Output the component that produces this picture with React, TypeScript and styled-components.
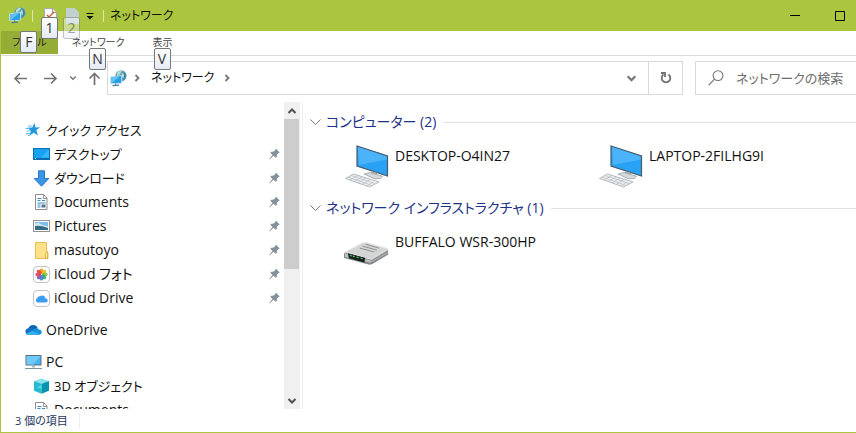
import React from "react";
import styled, { createGlobalStyle } from "styled-components";

const green = "#abc63e";
const fonts = `"Open Sans", "Noto Sans CJK JP", sans-serif`;

const GlobalStyle = createGlobalStyle`
  * { box-sizing: border-box; }
  body { margin: 0; background: #fff; overflow: hidden; }
  button, input { font: inherit; color: inherit; letter-spacing: inherit; }
  button { padding: 0; border: 0; background: none; text-align: left; }
  svg { display: block; flex: none; }
`;

const Window = styled.div`
  display: flex;
  flex-direction: column;
  height: 100vh;
  border-left: 1px solid ${green};
  border-bottom: 1px solid ${green};
  background: #fff;
  color: #111;
  font-family: ${fonts};
  font-size: 14px;
  line-height: 24px;
  white-space: nowrap;
  font-feature-settings: "palt";
`;

const TitleBar = styled.header`
  display: flex;
  align-items: center;
  height: 31px;
  flex: none;
  padding-left: 8px;
  background: ${green};
`;

const Divider = styled.span`
  width: 1px;
  height: 12px;
  margin: 0 6px;
  background: #dbe5ad;
`;

const QuickButton = styled.button<{ $narrow?: boolean }>`
  position: relative;
  display: flex;
  align-items: center;
  justify-content: center;
  width: ${(p) => (p.$narrow ? 14 : 22)}px;
  height: 16px;
`;

const Title = styled.h1`
  flex: 1;
  margin: 0;
  font-size: 12px;
  font-weight: 400;
  line-height: 24px;
`;

const CaptionButton = styled.button`
  display: flex;
  align-items: center;
  justify-content: center;
  width: 45px;
  height: 31px;
  flex: none;
`;

const CaptionArea = styled.div`
  display: flex;
  margin-right: -6px;
`;

const KeyTip = styled.kbd<{ $top: number; $dim?: boolean }>`
  position: absolute;
  z-index: 2;
  top: ${(p) => p.$top}px;
  left: calc(50% - 9px);
  width: 17px;
  height: 22px;
  border: 1px solid #74777b;
  border-radius: 2px;
  background: linear-gradient(#fff, #e4eaf4);
  color: #333;
  font-family: ${fonts};
  font-size: 14px;
  line-height: 20px;
  text-align: center;
  opacity: ${(p) => (p.$dim ? 0.45 : 1)};
`;

const Ribbon = styled.nav`
  display: flex;
  height: 25px;
  flex: none;
  border-bottom: 1px solid #d9d9d9;
`;

const Tab = styled.button<{ $active?: boolean }>`
  position: relative;
  height: 23px;
  padding: 0 ${(p) => (p.$active ? 11 : 14)}px;
  background: ${(p) => (p.$active ? "#96ad35" : "transparent")};
  color: ${(p) => (p.$active ? "#222" : "#444")};
  font-size: 10px;
  line-height: 23px;
`;

const AddressRow = styled.div`
  display: flex;
  align-items: center;
  flex: none;
  padding: 5px 0 7px 11px;
`;

const NavButton = styled.button`
  display: flex;
  align-items: center;
  justify-content: center;
  width: 17px;
  height: 34px;
  flex: none;
`;

const NavGroup = styled.div`
  display: flex;
  gap: 5px;
  width: 95px;
  flex: none;
  > :first-child { margin-right: 8px; }
`;

const AddressBox = styled.div`
  display: flex;
  align-items: center;
  flex: 1;
  height: 34px;
  border: 1px solid #d9d9d9;
  padding-left: 2px;
`;

const Crumb = styled.button`
  font-size: 12px;
  margin: 0 8px 0 9px;
`;

const Crumbs = styled.div`
  display: flex;
  align-items: center;
  flex: 1;
  > svg + svg { margin-left: 5px; }
`;

const BoxButton = styled.button<{ $edge?: boolean }>`
  display: flex;
  align-items: center;
  justify-content: center;
  width: 34px;
  height: 32px;
  border-left: ${(p) => (p.$edge ? "1px solid #d9d9d9" : "0")};
`;

const SearchBox = styled.label`
  display: flex;
  align-items: center;
  gap: 12px;
  width: 161px;
  height: 34px;
  flex: none;
  margin-left: 12px;
  padding-left: 12px;
  border: 1px solid #d9d9d9;
  border-right: 0;
  color: #6d6d6d;
`;

const SearchInput = styled.input`
  flex: 1;
  min-width: 0;
  padding: 0;
  border: 0;
  outline: 0;
  background: none;
  font-size: 13px;
  font-feature-settings: "palt";
  &::placeholder { color: #6d6d6d; opacity: 1; }
`;

const Body = styled.div`
  display: flex;
  flex: 1;
  min-height: 0;
`;

const TreePane = styled.aside`
  width: 283px;
  flex: none;
  overflow: hidden;
  padding-top: 16px;
`;

const TreeList = styled.ul`
  margin: 0 0 8px;
  padding: 0;
  list-style: none;
`;

const TreeItem = styled.button<{ $child?: boolean; $kana?: boolean }>`
  display: flex;
  align-items: center;
  gap: 4px;
  width: 100%;
  height: 24px;
  padding: 0 4px 0 ${(p) => (p.$child ? 32 : 24)}px;
  font-size: ${(p) => (p.$kana ? 13 : 14)}px;
`;

const TreeLabel = styled.span`
  flex: 1;
`;

const ScrollBar = styled.div`
  display: flex;
  flex-direction: column;
  width: 16px;
  flex: none;
  background: #f0f0f0;
`;

const ScrollButton = styled.button`
  display: flex;
  align-items: center;
  justify-content: center;
  height: 17px;
  flex: none;
`;

const ScrollTrack = styled.div`
  flex: 1;
`;

const ScrollThumb = styled.div`
  height: 55%;
  margin-right: 1px;
  background: #cdcdcd;
`;

const Content = styled.main`
  flex: 1;
  min-width: 0;
  margin-left: 2px;
  padding: 8px 0 0 6px;
  border-left: 1px solid #f0f0f0;
  overflow: hidden;
`;

const Group = styled.section`
  min-height: 86px;
`;

const GroupHeader = styled.h2`
  display: flex;
  align-items: center;
  gap: 4px;
  margin: 0;
  color: #1e3287;
  font-size: 14px;
  font-weight: 400;
  line-height: 24px;
  &::after {
    content: "";
    flex: 1;
    height: 1px;
    margin-left: 3px;
    background: #e2e2e2;
  }
`;

const Devices = styled.div`
  display: grid;
  grid-template-columns: repeat(auto-fill, 254px);
  padding: 10px 0 0 35px;
`;

const Device = styled.button`
  display: flex;
  align-items: flex-start;
  gap: 6px;
  font-size: 14px;
`;

const StatusBar = styled.footer`
  display: flex;
  align-items: center;
  gap: 11px;
  height: 23px;
  flex: none;
  padding-left: 14px;
  color: #26365c;
  font-size: 11px;
  &::after {
    content: "";
    width: 1px;
    height: 15px;
    background: #eee;
  }
`;

const NetworkIcon = () => (
  <svg width="17" height="17" viewBox="0 0 17 17">
    <circle cx="11" cy="5.8" r="5.6" fill="#5c9fbb" />
    <path d="M7 3Q10-.5 12 1L10 4 7 6zM12 3l3 1 .5 3-2 2-2-3z" fill="#b8ddc9" />
    <path d="M13 1.500q3 2 3 5-1 3-3 4l1-5z" fill="#3685ac" />
    <path d="M.5 6.800 11.500 5.500v7.800L.5 13.800z" fill="#299fe5" stroke="#dceefa" strokeWidth=".7" />
    <path d="M1 7.300 10 6.300 2 13H1z" fill="#63c1f6" />
    <path d="M5.500 13.500v1.500M2.500 15.700 9 15.200" stroke="#527991" strokeWidth="1.200" />
  </svg>
);

const Arrow = ({ kind }: { kind: "left" | "right" | "up" }) => (
  <svg width="15" height="15" viewBox="0 0 15 15" fill="none" stroke="#737373" strokeWidth="1.700">
    {kind === "left" && <path d="M14 7.500H2M7 2.500l-5 5 5 5" />}
    {kind === "right" && <path d="M1 7.500h12M8 2.500l5 5-5 5" />}
    {kind === "up" && <path d="M7.500 14V2.500M2.500 7.500l5-5 5 5" />}
  </svg>
);

const chevrons = {
  down: "M1.5 3 5 6.5 8.5 3",
  up: "M1.5 7 5 3.5 8.5 7",
  right: "M3.5 2 6.5 5l-3 3",
};

const Chevron = ({ to, size = 10, color = "#777", weight = 1.8 }: {
  to: keyof typeof chevrons; size?: number; color?: string; weight?: number;
}) => (
  <svg width={size} height={size} viewBox="0 0 10 10" fill="none" stroke={color} strokeWidth={weight}>
    <path d={chevrons[to]} />
  </svg>
);

const GroupChevron = () => (
  <svg width="13" height="12" viewBox="0 0 13 12" fill="none" stroke="#777">
    <path d="m1.500 3.500 5 5 5-5" />
  </svg>
);

const PageIcon = ({ dim }: { dim?: boolean }) => (
  <svg width="13" height="16" viewBox="0 0 13 16">
    <path d="M.5.5h8l4 4v11H.5z" fill={dim ? "#c0cfd0" : "#fff"} stroke={dim ? "#c0cfd0" : "#aaa"} />
    {!dim && <path d="M8.500.500v4h4" fill="#eee" stroke="#999" />}
    {!dim && <path d="m3 7 2 2 5-5" fill="none" stroke="#d15436" strokeWidth="1.300" />}
  </svg>
);

const OverflowIcon = () => (
  <svg width="8" height="8" viewBox="0 0 8 8">
    <path d="M.5 1.500h7" stroke="#111" /><path d="M.5 4h7L4 7.500z" fill="#111" />
  </svg>
);

const RefreshIcon = () => (
  <svg width="12" height="14" viewBox="0 0 12 14" fill="none" stroke="#707070" strokeWidth="1.800">
    <path d="M8.500 3.500a4.300 4.300 0 1 1-5 0M1 2h4v4" />
  </svg>
);

const SearchIcon = () => (
  <svg width="16" height="16" viewBox="0 0 16 16" fill="none" stroke="#777" strokeWidth="1.100">
    <circle cx="10" cy="5.600" r="4.900" /><path d="M6.500 9.200.8 15" />
  </svg>
);

const Pin = () => (
  <svg width="11" height="12" viewBox="0 0 11 12" fill="#86919b">
    <path d="M6.800.5 10.700 4.400 9.500 5 8 6.500 7.800 9 6.600 9.800 4.500 7.700 1 11.300.3 11.500.5 10.800 3.500 7 1.300 4.800 2.200 3.700 4.800 3.500 6.300 2z" />
  </svg>
);

const icons = {
  star: (
    <svg width="17" height="16" viewBox="0 0 17 16">
      <path d="m9.500 1 1 4.500 4.500-.3-3.700 3.100 1.800 5.200-4.400-2.800-4.200 3.100 1.400-4.900L2.500 5.700l4.700-.2z" fill="#2497dc" />
      <path d="M3 4h4M.5 6.500H5M1.500 9h4M1 11.500h4M3 13.500h2" stroke="#4fb5ed" strokeWidth=".9" />
    </svg>
  ),
  desktop: (
    <svg width="17" height="16" viewBox="0 0 17 16">
      <rect x=".5" y="2.500" width="16" height="11" fill="#16a1f3" stroke="#0b6fb8" />
      <path d="M15 4 8 11.500h8V4z" fill="#36b4fa" />
      <path d="M1 12.600h15" stroke="#0b63a3" /><path d="M2 12.600h1" stroke="#fff" />
    </svg>
  ),
  download: (
    <svg width="17" height="17" viewBox="0 0 17 17">
      <path d="M5.500.8h6v7.700h4.300l-7.300 7.700L1.200 8.500h4.300z" fill="#3c96e6" stroke="#2875c7" />
    </svg>
  ),
  document: (
    <svg width="17" height="16" viewBox="0 0 17 16">
      <path d="M2.500.5h8l3.500 3.500v11.500H2.500z" fill="#fff" stroke="#8d8d8d" /><path d="M10.500.500v4H14" fill="none" stroke="#999" />
      <path d="M4.500 4.500h4M4.500 6.500h3M9 6.500h3M4.500 9h8M4.500 11h3M4.500 13h3" stroke="#3589c5" />
      <path d="M8.500 10.500h4v3h-4z" fill="#54758a" />
    </svg>
  ),
  picture: (
    <svg width="17" height="16" viewBox="0 0 17 16">
      <rect x=".5" y="2.500" width="16" height="11" fill="#fff" stroke="#929292" />
      <path d="M2 4h13v8H2z" fill="#7ebde8" /><path d="M2 5.500q4-2 6 1l7 2V12H2z" fill="#d4e9ee" />
      <path d="M2 8q5-1 13 2v2H2z" fill="#386982" />
    </svg>
  ),
  folder: (
    <svg width="17" height="17" viewBox="0 0 17 17">
      <path d="M2.500.500h11v9l1.500 1v6H2.500z" fill="#ffe18a" stroke="#e7bd51" /><path d="M12.500 16v-5l2-1.500V16z" fill="#ffedb0" stroke="#dfb84e" />
    </svg>
  ),
  photos: (
    <svg width="17" height="17" viewBox="0 0 17 17">
      <rect x=".5" y=".5" width="16" height="16" rx="3.500" fill="#fff" stroke="#c2c2c2" />
      {["#f7932a", "#e8c51b", "#85c440", "#32ae78", "#3f8ed0", "#8a5bb4", "#d34e80", "#ee4537"].map((c, i) => (
        <ellipse key={c} cx="8.500" cy="5.200" rx="1.900" ry="2.800" fill={c} fillOpacity=".95" transform={`rotate(${i * 45} 8.500 8.500)`} />
      ))}
    </svg>
  ),
  icloud: (
    <svg width="17" height="17" viewBox="0 0 17 17">
      <rect x=".5" y=".5" width="16" height="16" rx="3.500" fill="#fff" stroke="#c2c2c2" />
      <path d="M4.500 12.500a2.500 2.500 0 0 1 0-4.700A2 2 0 0 1 7 6.300a3.300 3.300 0 0 1 5.500 2.200 2 2 0 0 1 .5 4z" fill="#3c9dee" />
    </svg>
  ),
  onedrive: (
    <svg width="17" height="12" viewBox="0 0 17 12">
      <path d="M3.500 4A5 5 0 0 1 12.700 4l-2 4-8 2z" fill="#0864b2" /><path d="M3.700 4.200q3-1 5 1L3 11Q.5 10 .3 7.500q.2-3 3.400-3.300z" fill="#1470c4" />
      <path d="M8.500 5.500Q12 2.500 14 5.500q3 .5 2.700 3.300-.5 2-3 2.200H3z" fill="#1692df" /><path d="m7 7 8.500 3.400-1.800.6H3Q1.700 10.700 1 9.700z" fill="#36b0ed" />
    </svg>
  ),
  pc: (
    <svg width="17" height="16" viewBox="0 0 17 16">
      <rect x="1" y="1.500" width="15" height="9.500" fill="#45b4f2" stroke="#5b6f7d" /><path d="M15.500 2 8 10.500H1.500V2z" fill="#70c9f8" />
      <path d="M7 11.500h3v2H7z" fill="#a9b8c2" /><path d="M0 14.500h17" stroke="#7793a4" />
    </svg>
  ),
  cube: (
    <svg width="17" height="16" viewBox="0 0 17 16">
      <path d="m1 3 7.500-2.500L16 3 8.500 5.800z" fill="#85e4ef" /><path d="m1 3 7.500 2.800v10L1 12.700z" fill="#26bad0" /><path d="M16 3 8.500 5.800v10l7.500-3.100z" fill="#0795ae" />
      <path d="m4 9 4.500-1.500v3.500z" fill="#5ddce8" />
    </svg>
  ),
};

const ComputerIcon = () => (
  <svg width="45" height="45" viewBox="0 0 45 45">
    <path d="m13 1.500 31 10-.5 21L13 22z" fill="#e5e8e9" />
    <path d="m13 2 30.500 10v20L13 22z" fill="#29a2f6" stroke="#485966" strokeWidth="1.200" />
    <path d="m14 3 28.700 9.500v3L15 21z" fill="#55b8fa" opacity=".75" />
    <path d="m27 27 6 2v3l-6-2z" fill="#a8afb5" /><path d="m20 30 6-1.500 12.500 3.700-2 2.200-6 .5z" fill="#d4d9dc" stroke="#929ba1" strokeWidth=".7" />
    <path d="m1.500 34.500 8-4.500 25.500 8-9.500 5z" fill="#edf0f1" stroke="#a4abb1" strokeWidth=".8" />
    <path d="m4 33 24 8.500M7 31.500 31 39.500M6 36l8-4.500m-4 6 8-4.500m-4 6 8-5m-4 6.500 8-5m-3 6.500 6-4" stroke="#b4bbc1" strokeWidth=".7" />
  </svg>
);

const RouterIcon = () => (
  <svg width="45" height="45" viewBox="0 0 46 45">
    <path d="M0 24.500 1 22l18-9 4-.8 21.500 6.300.8 6L29 34.200l-3 .8-26-7z" fill="#858888" />
    <path d="M1 22 19 12.500h5L45 19 28 29.500z" fill="#d3d5d5" stroke="#eee" />
    <path d="m1 23.500 26.500 7.200V33L1 27z" fill="#bfc1c1" />
    <path d="m4 23.300 17.500 4.500-.5 5L5 28.500z" fill="#17201c" />
    <path d="m6 25.500 2 .5m1 .3 2 .5m2 .5 2 .5m2 .5 2 .5" stroke="#45c46e" strokeWidth="1.400" />
    <path d="m16 18 15 4m-12-6 14.500 4M22 14l14 4" stroke="#8c9090" strokeWidth="1" />
    <path d="m28 30 16.500-9.500M28 32l16.500-9" stroke="#c6c9c9" strokeWidth=".8" />
  </svg>
);

type Entry = { icon: keyof typeof icons; label: string; kana?: boolean };

const quickAccess: Entry[] = [
  { icon: "desktop", label: "デスクトップ", kana: true },
  { icon: "download", label: "ダウンロード", kana: true },
  { icon: "document", label: "Documents" },
  { icon: "picture", label: "Pictures" },
  { icon: "folder", label: "masutoyo" },
  { icon: "photos", label: "iCloud フォト" },
  { icon: "icloud", label: "iCloud Drive" },
];

const pcItems: Entry[] = [
  { icon: "cube", label: "3D オブジェクト", kana: true },
  { icon: "document", label: "Documents" },
];

const Entries = ({ root, items = [], pinned }: { root: Entry; items?: Entry[]; pinned?: boolean }) => (
  <TreeList>
    <li>
      <TreeItem $kana={root.kana}>{icons[root.icon]}<TreeLabel>{root.label}</TreeLabel></TreeItem>
    </li>
    {items.map((e) => (
      <li key={e.label}>
        <TreeItem $child $kana={e.kana}>
          {icons[e.icon]}<TreeLabel>{e.label}</TreeLabel>{pinned && <Pin />}
        </TreeItem>
      </li>
    ))}
  </TreeList>
);

const DeviceGroup = ({ title, names, icon }: { title: string; names: string[]; icon: React.ReactNode }) => (
  <Group>
    <GroupHeader><GroupChevron />{title}</GroupHeader>
    <Devices>{names.map((n) => <Device key={n}>{icon}{n}</Device>)}</Devices>
  </Group>
);

export default function App() {
  return (
    <Window>
      <GlobalStyle />
      <TitleBar>
        <NetworkIcon />
        <Divider />
        <QuickButton aria-label="プロパティ"><PageIcon /><KeyTip $top={9}>1</KeyTip></QuickButton>
        <QuickButton aria-label="新しいフォルダー"><PageIcon dim /><KeyTip $top={9} $dim>2</KeyTip></QuickButton>
        <QuickButton $narrow aria-label="カスタマイズ"><OverflowIcon /></QuickButton>
        <Divider />
        <Title>ネットワーク</Title>
        <CaptionArea>
          <CaptionButton aria-label="最小化">
            <svg width="10" height="10" viewBox="0 0 10 10"><path d="M0 4.500h10" stroke="#000" /></svg>
          </CaptionButton>
          <CaptionButton aria-label="最大化">
            <svg width="10" height="10" viewBox="0 0 10 10"><path d="M.5.5h9v9h-9z" fill="none" stroke="#000" /></svg>
          </CaptionButton>
        </CaptionArea>
      </TitleBar>
      <Ribbon>
        <Tab $active>ファイル<KeyTip $top={0}>F</KeyTip></Tab>
        <Tab>ネットワーク<KeyTip $top={17}>N</KeyTip></Tab>
        <Tab>表示<KeyTip $top={17}>V</KeyTip></Tab>
      </Ribbon>
      <AddressRow>
        <NavGroup>
          <NavButton aria-label="戻る"><Arrow kind="left" /></NavButton>
          <NavButton aria-label="進む"><Arrow kind="right" /></NavButton>
          <NavButton aria-label="履歴"><Chevron to="down" size={8} /></NavButton>
          <NavButton aria-label="上へ"><Arrow kind="up" /></NavButton>
        </NavGroup>
        <AddressBox>
          <Crumbs>
            <NetworkIcon /><Chevron to="right" />
            <Crumb>ネットワーク</Crumb>
            <Chevron to="right" />
          </Crumbs>
          <BoxButton aria-label="以前の場所"><Chevron to="down" size={11} weight={2} /></BoxButton>
          <BoxButton $edge aria-label="更新"><RefreshIcon /></BoxButton>
        </AddressBox>
        <SearchBox>
          <SearchIcon />
          <SearchInput type="text" aria-label="ネットワークの検索" placeholder="ネットワークの検索" />
        </SearchBox>
      </AddressRow>
      <Body>
        <TreePane>
          <Entries root={{ icon: "star", label: "クイック アクセス", kana: true }} items={quickAccess} pinned />
          <Entries root={{ icon: "onedrive", label: "OneDrive" }} />
          <Entries root={{ icon: "pc", label: "PC" }} items={pcItems} />
        </TreePane>
        <ScrollBar>
          <ScrollButton aria-label="上へスクロール"><Chevron to="up" color="#505050" weight={2} /></ScrollButton>
          <ScrollTrack><ScrollThumb /></ScrollTrack>
          <ScrollButton aria-label="下へスクロール"><Chevron to="down" color="#505050" weight={2} /></ScrollButton>
        </ScrollBar>
        <Content>
          <DeviceGroup title="コンピューター (2)" names={["DESKTOP-O4IN27", "LAPTOP-2FILHG9I"]} icon={<ComputerIcon />} />
          <DeviceGroup title="ネットワーク インフラストラクチャ (1)" names={["BUFFALO WSR-300HP"]} icon={<RouterIcon />} />
        </Content>
      </Body>
      <StatusBar>3 個の項目</StatusBar>
    </Window>
  );
}
